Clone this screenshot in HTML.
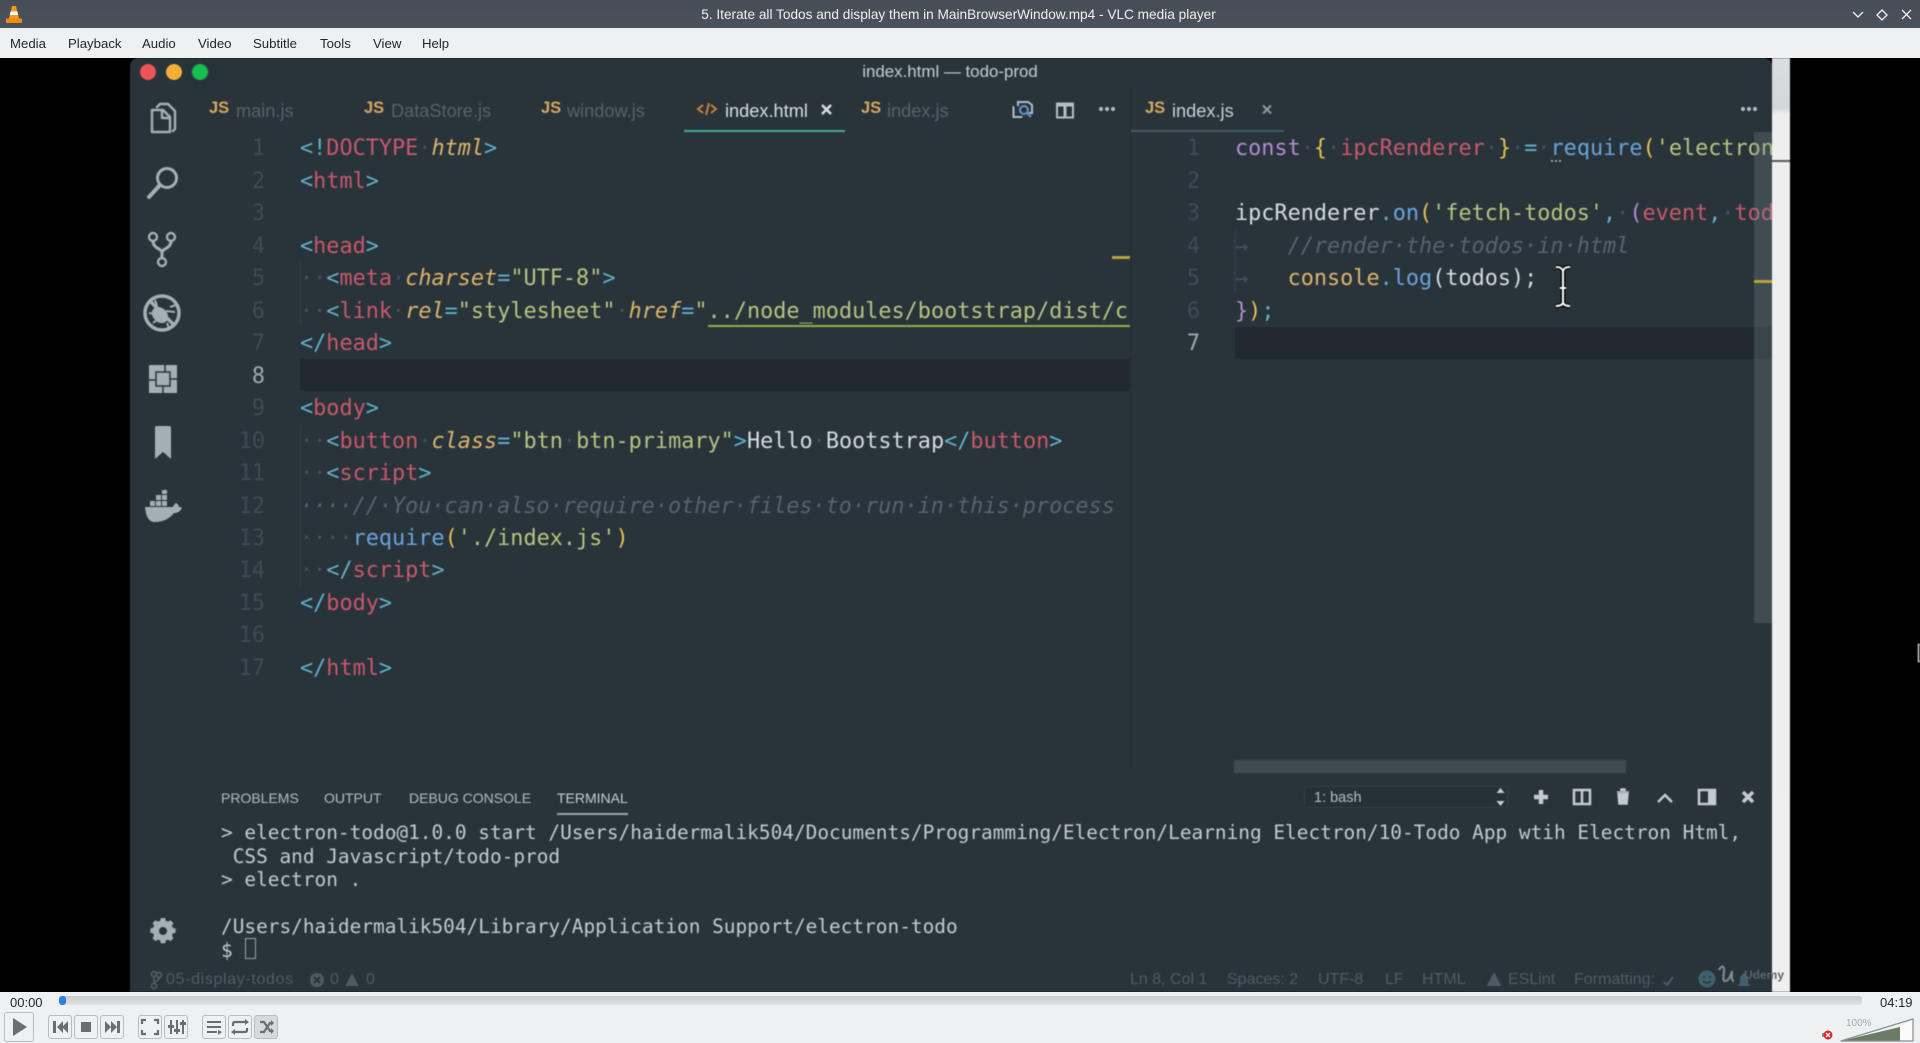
<!DOCTYPE html>
<html><head><meta charset="utf-8"><title>VLC</title>
<style>
html,body{margin:0;padding:0;width:1920px;height:1043px;overflow:hidden;background:#000;font-family:"Liberation Sans",sans-serif}
.a{position:absolute;white-space:nowrap}
pre.a{white-space:pre}
#tb{left:0;top:0;width:1920px;height:28px;background:linear-gradient(#454d56,#4a525b)}
#mb{left:0;top:28px;width:1920px;height:30px;background:#eff0f1}
.m{top:35.500px;font-size:13.2px;color:#232629;line-height:16px}
#vid{left:0;top:58px;width:1920px;height:934px;background:#000;overflow:hidden}
#in{position:absolute;left:0;top:0;width:1920px;height:1043px;filter:blur(.45px)}
#win{left:130px;top:58px;width:1642px;height:940px;background:#28333a;border-radius:8px 8px 0 0}
#st{left:1772px;top:58px;width:18px;height:934px;background:linear-gradient(#dcdde0 0,#d5d6da 50px,#eeeeee 56px,#efefef 100%)}
pre{margin:0;font-family:"DejaVu Sans Mono","Liberation Mono",monospace;font-size:21.83px;line-height:32.47px;color:#d5dcdf}
.code{top:133.4px;overflow:hidden;height:620px}
.ln{top:133.4px;text-align:right;color:#3f4c53}
.ln b{font-weight:400;color:#a2aaae}
.c{color:#62b2cc}.r{color:#c9586a}.y{font-style:italic;color:#dcb56c}.s{color:#b5c580}.d{color:#465259}
.g{color:#56646b;font-style:italic}.w{color:#d5dcdf}.b{color:#6aa3dd}.p{color:#b48ad6}.o{color:#dcb56c}.f{color:#e6c14f}
.u{border-bottom:2px solid #8fb04a;padding-bottom:1px}
.t{top:100.500px;font-size:18.2px;line-height:21px;color:#56626a}
.js{top:98px;font-size:16.5px;line-height:20px;font-weight:700;color:#d9a760}
.hd{top:790px;font-size:14px;line-height:16px;color:#b3bcc0}
#term{left:221px;top:821px;font-size:19.43px;line-height:23.5px;color:#c3cbce}
.sb{top:971px;font-size:16px;line-height:18px;color:#4d5c64}
</style></head><body>

<div class="a" id="vid"></div>
<div id="in">
<div class="a" id="st"></div>
<div class="a" style="left:1772px;top:160px;width:18px;height:2px;background:#55595c"></div>
<div class="a" id="win" style="height:934px"></div>

<div class="a" style="left:130px;top:62px;text-align:center;font-size:16.9px;line-height:20px;color:#c6cdd0;width:1640px">index.html — todo-prod</div>
<div class="a" style="left:140px;top:64px;width:16px;height:16px;border-radius:50%;background:#f0525a"></div>
<div class="a" style="left:166px;top:64px;width:16px;height:16px;border-radius:50%;background:#f5ae36"></div>
<div class="a" style="left:192px;top:64px;width:16px;height:16px;border-radius:50%;background:#16bd50"></div>

<!-- active lines -->
<div class="a" style="left:300px;top:359px;width:830px;height:32px;background:#1f292f"></div>
<div class="a" style="left:1235px;top:326.5px;width:537px;height:32.5px;background:#1f292f"></div>

<!-- indent guides -->
<div class="a" style="left:300px;top:262px;width:1px;height:64px;background:#323e45"></div>
<div class="a" style="left:300px;top:424px;width:1px;height:162px;background:#323e45"></div>

<!-- tabs -->
<div class="a js" style="left:209px">JS</div><div class="a t" style="left:236px">main.js</div>
<div class="a js" style="left:364px">JS</div><div class="a t" style="left:391px">DataStore.js</div>
<div class="a js" style="left:541px">JS</div><div class="a t" style="left:567px">window.js</div>
<div class="a t" style="left:725px;color:#d8dee0">index.html</div>
<div class="a js" style="left:861px">JS</div><div class="a t" style="left:887px">index.js</div>
<div class="a js" style="left:1145px">JS</div><div class="a t" style="left:1172px;color:#c8d0d3">index.js</div>
<div class="a" style="left:684px;top:130px;width:161px;height:2px;background:#47a995"></div>
<div class="a" style="left:1130px;top:130px;width:154px;height:2px;background:#4a5a62"></div>
<div class="a" style="left:1130px;top:90px;width:1px;height:680px;background:#232d33"></div>

<!-- gutters -->
<pre class="a ln" style="left:220px;width:45px">1
2
3
4
5
6
7
<b>8</b>
9
10
11
12
13
14
15
16
17</pre>
<pre class="a ln" style="left:1160px;width:40px">1
2
3
4
5
6
<b>7</b></pre>

<!-- left code -->
<pre class="a code" style="left:300px;width:830px"><span class="c">&lt;!</span><span class="r">DOCTYPE</span><span class="d">·</span><span class="y">html</span><span class="c">&gt;</span>
<span class="c">&lt;</span><span class="r">html</span><span class="c">&gt;</span>

<span class="c">&lt;</span><span class="r">head</span><span class="c">&gt;</span>
<span class="d">··</span><span class="c">&lt;</span><span class="r">meta</span><span class="d">·</span><span class="y">charset</span><span class="c">=</span><span class="s">"UTF-8"</span><span class="c">&gt;</span>
<span class="d">··</span><span class="c">&lt;</span><span class="r">link</span><span class="d">·</span><span class="y">rel</span><span class="c">=</span><span class="s">"stylesheet"</span><span class="d">·</span><span class="y">href</span><span class="c">=</span><span class="s">"<span class="u">../node_modules/bootstrap/dist/css/bootstrap.min.css</span></span>
<span class="c">&lt;/</span><span class="r">head</span><span class="c">&gt;</span>

<span class="c">&lt;</span><span class="r">body</span><span class="c">&gt;</span>
<span class="d">··</span><span class="c">&lt;</span><span class="r">button</span><span class="d">·</span><span class="y">class</span><span class="c">=</span><span class="s">"btn<span class="d">·</span>btn-primary"</span><span class="c">&gt;</span>Hello<span class="d">·</span>Bootstrap<span class="c">&lt;/</span><span class="r">button</span><span class="c">&gt;</span>
<span class="d">··</span><span class="c">&lt;</span><span class="r">script</span><span class="c">&gt;</span>
<span class="g">····//·You·can·also·require·other·files·to·run·in·this·process</span>
<span class="d">····</span><span class="b">require</span><span class="f">(</span><span class="s">'./index.js'</span><span class="f">)</span>
<span class="d">··</span><span class="c">&lt;/</span><span class="r">script</span><span class="c">&gt;</span>
<span class="c">&lt;/</span><span class="r">body</span><span class="c">&gt;</span>

<span class="c">&lt;/</span><span class="r">html</span><span class="c">&gt;</span></pre>

<!-- right code -->
<pre class="a code" style="left:1235px;width:537px"><span class="p">const</span><span class="d">·</span><span class="f">{</span><span class="d">·</span><span class="r">ipcRenderer</span><span class="d">·</span><span class="f">}</span><span class="d">·</span><span class="c">=</span><span class="d">·</span><span class="b">require</span><span class="f">(</span><span class="s">'electron'</span><span class="f">)</span>

<span class="w">ipcRenderer</span><span class="c">.</span><span class="b">on</span><span class="f">(</span><span class="s">'fetch-todos'</span><span class="c">,</span><span class="d">·</span><span class="p">(</span><span class="r">event</span><span class="c">,</span><span class="d">·</span><span class="r">todos</span><span class="p">)</span>
<span class="d">→</span>   <span class="g">//render·the·todos·in·html</span>
<span class="d">→</span>   <span class="o">console</span><span class="c">.</span><span class="b">log</span><span class="w">(todos);</span>
<span class="p">}</span><span class="f">)</span><span class="c">;</span></pre>

<!-- scrollbars, markers -->
<div class="a" style="left:1754px;top:132px;width:18px;height:491px;background:rgba(120,135,140,.3)"></div>
<div class="a" style="left:1234px;top:760px;width:392px;height:13px;background:#3f4b52"></div>
<div class="a" style="left:1112px;top:256px;width:18px;height:3px;background:#b9a23d"></div>
<div class="a" style="left:1754px;top:280px;width:18px;height:3px;background:#b9a23d"></div>

<!-- panel -->
<div class="a hd" style="left:221px">PROBLEMS</div>
<div class="a hd" style="left:324px">OUTPUT</div>
<div class="a hd" style="left:409px">DEBUG CONSOLE</div>
<div class="a hd" style="left:557px;color:#c6ced1">TERMINAL</div>
<div class="a" style="left:557px;top:813px;width:71px;height:2px;background:#9aa5a9"></div>
<div class="a" style="left:1304px;top:786px;width:204px;height:22px;border:1px solid #323f46;border-radius:4px;box-sizing:border-box;background:#263037"></div>
<div class="a" style="left:1314px;top:790px;font-size:14.5px;line-height:17px;color:#b4bdc1">1: bash</div>
<pre class="a" id="term">&gt; electron-todo@1.0.0 start /Users/haidermalik504/Documents/Programming/Electron/Learning Electron/10-Todo App wtih Electron Html,
 CSS and Javascript/todo-prod
&gt; electron .

/Users/haidermalik504/Library/Application Support/electron-todo
$ </pre>
<div class="a" style="left:245px;top:938px;width:11px;height:21px;border:1.5px solid #9ba5a9;box-sizing:border-box"></div>

<!-- status bar -->
<div class="a sb" style="left:166px;letter-spacing:.65px">05-display-todos</div>
<div class="a sb" style="left:330px">0</div>
<div class="a sb" style="left:366px">0</div>
<div class="a sb" style="left:1130px">Ln 8, Col 1</div>
<div class="a sb" style="left:1227px">Spaces: 2</div>
<div class="a sb" style="left:1318px">UTF-8</div>
<div class="a sb" style="left:1385px">LF</div>
<div class="a sb" style="left:1422px">HTML</div>
<div class="a sb" style="left:1508px">ESLint</div>
<div class="a sb" style="left:1574px">Formatting:</div>
<div class="a" style="left:1744px;top:968px;font-size:12px;line-height:14px;color:#5a666d;font-weight:700;z-index:3">Udemy</div>

<svg class="a" style="left:0;top:0" width="1920" height="1043" viewBox="0 0 1920 1043" fill="none">
<g stroke="#cf7f3c" stroke-width="2"><path d="M703 105l-5 4 5 4M711 105l5 4-5 4M709 103l-3 12"/></g>
<path d="M822 105l9 9M831 105l-9 9" stroke="#d8dee0" stroke-width="2.6"/>
<path d="M1263 105.500l8 8M1271 105.500l-8 8" stroke="#8d989d" stroke-width="2.2"/>
<g stroke="#a3b0b3" stroke-width="2.4" stroke-linejoin="round" stroke-linecap="round">
<path d="M157 107l3-3h8l7 7v18l-2 2" /><path d="M152 110h11l7 7v15h-18z" stroke-width="2.4"/><path d="M162 111v7h8"/>
<circle cx="167" cy="178" r="9.500" stroke-width="3"/><path d="M160 185l-11 12" stroke-width="4"/>
<circle cx="153" cy="237" r="4"/><circle cx="171" cy="237" r="4"/><circle cx="162" cy="262" r="4"/>
<path d="M153 241c0 8 9 7 9 12v5M171 241c0 8-9 7-9 12" stroke-width="3"/>
<circle cx="162" cy="313" r="17" stroke-width="3.500"/><path d="M150 301l24 24" stroke-width="3.500"/>
</g>
<g fill="#a3b0b3">
<ellipse cx="160" cy="315" rx="7" ry="9" transform="rotate(-45 160 315)"/>
<path d="M155 300l2 6M170 307l6-2M149 313l6 1M167 323l2 5M153 323l4-3M166 311l9 1"  stroke="#a3b0b3" stroke-width="2"/>
<rect x="149" y="365" width="28" height="28"/>
<path d="M155 428q0-2 2-2h12q2 0 2 2v31l-8-7-8 7z"/>
<path d="M145 507h28c1-3 3-4 3-4 2 1 3 3 3 4 2 0 3 1 3 1-2 4-5 5-8 5-4 5-10 9-19 9-6 0-9-5-10-15z"/>
<path d="M150 501h5v5h-5zM156 501h5v5h-5zM162 501h5v5h-5zM156 495h5v5h-5zM162 495h5v5h-5zM162 490h5v4h-5z"/>
<path transform="translate(163 931) scale(.72) translate(-163 -937)" d="M160 919h6l1 4 3 1 3.500-2 4 4-2 3.500 1 3 4 1v6l-4 1-1 3 2 3.500-4 4-3.500-2-3 1-1 4h-6l-1-4-3-1-3.500 2-4-4 2-3.500-1-3-4-1v-6l4-1 1-3-2-3.500 4-4 3.500 2 3-1z"/>
</g>
<path d="M165 365v7M170 379h7M163 386v7M149 380h7" stroke="#28333a" stroke-width="1.500"/>
<rect x="156" y="372" width="14" height="14" stroke="#28333a" stroke-width="1.500"/>
<circle cx="163" cy="931" r="4" fill="#28333a"/>
<g stroke="#b4bec2" stroke-width="2" fill="none">
<path d="M1014 107h-0.500v10h9M1022 102h6l4 3v8h-3M1018 106v-4h4"/>
<rect x="1057" y="103.500" width="16" height="14"/><path d="M1065 104v13M1057 105h16" stroke-width="3"/>
</g>
<circle cx="1024" cy="110" r="4" stroke="#5b9bd5" stroke-width="2"/><path d="M1027 113l4 4" stroke="#5b9bd5" stroke-width="2"/>
<g fill="#b4bec2">
<circle cx="1101" cy="109" r="2"/><circle cx="1107" cy="109" r="2"/><circle cx="1113" cy="109" r="2"/>
<circle cx="1743" cy="109" r="2"/><circle cx="1749" cy="109" r="2"/><circle cx="1755" cy="109" r="2"/>
<circle cx="1552" cy="161" r="1"/><circle cx="1556" cy="161" r="1"/><circle cx="1560" cy="161" r="1"/>
</g>
<path d="M1235 230v64" stroke="#37434a"/>
<path d="M1496.500 793l4-5 4 5zM1496.500 801l4 5 4-5z" fill="#c4ccd0"/>
<g stroke="#c3cbce" stroke-width="2.500" fill="none">
<path d="M1541 790v14M1534 797h14" stroke-width="4.500"/>
<rect x="1574" y="790" width="16" height="14"/><path d="M1582 790v14"/>
<path d="M1617 792h12M1621 791v-2h4v2M1618 793l1 11h8l1-11" fill="#c3cbce" stroke-width="1.500"/>
<path d="M1658 802l7-7 7 7"/>
<rect x="1699" y="790" width="16" height="14"/>
<path d="M1743 792l10 10M1753 792l-10 10" stroke-width="3.500"/>
</g>
<rect x="1708" y="790" width="7" height="14" fill="#c3cbce"/>
<g stroke="#4d5c64" stroke-width="1.800" fill="none">
<circle cx="154" cy="974" r="2.500"/><circle cx="154" cy="986" r="2.500"/><circle cx="159" cy="975" r="2.500"/>
<path d="M154 976v8M159 977c0 5-5 4-5 7"/>
</g>
<circle cx="317" cy="980" r="7" fill="#4d5c64"/><path d="M314 977l6 6M320 977l-6 6" stroke="#28333a" stroke-width="2"/>
<path d="M352 973l7 13h-14z" fill="#4d5c64"/>
<path d="M1494 972l7.500 14h-15z" fill="#4d5c64"/>
<path d="M1664 982l3 3 6-8" stroke="#4d5c64" stroke-width="2"/>
<circle cx="1707" cy="979" r="8.500" fill="#41606f"/><circle cx="1704" cy="977" r="1" fill="#28333a"/><circle cx="1710" cy="977" r="1" fill="#28333a"/><path d="M1703 981q4 4 8 0" stroke="#28333a" stroke-width="1.300"/>
<path d="M1737 986q3-1 3-6t4-7q4 2 4 7t3 6z" fill="#41606f"/>
<path d="M1719 970c2-4 5-5 5 0 0 6-2 11 1 11 4 0 6-6 7-10 0 5-1 10 2 10" stroke="#808a8e" stroke-width="2.200"/>
<path d="M1556 267c4 0 6 1 7 4 1-3 3-4 7-4M1563 271v32M1556 306c4 0 6-1 7-3 1 2 3 3 7 3M1560 288h6" stroke="#000" stroke-width="4.500"/>
<path d="M1556 267c4 0 6 1 7 4 1-3 3-4 7-4M1563 271v32M1556 306c4 0 6-1 7-3 1 2 3 3 7 3M1560 288h6" stroke="#fff" stroke-width="2"/>
<path d="M1920 644.500h-1.500v17h1.500" stroke="#cfcfcf" stroke-width="1.500"/>
</svg>
</div>

<!-- chrome (sharp) -->
<div class="a" id="tb"></div>
<div class="a" id="mb"></div>
<div class="a" style="left:0;top:5px;width:1917px;text-align:center;font-size:13.65px;line-height:20px;color:#eff0f1">5. Iterate all Todos and display them in MainBrowserWindow.mp4 - VLC media player</div>
<svg class="a" style="left:6px;top:5px" width="16" height="19" viewBox="0 0 16 19"><path d="M6 1h4l1.600 7h-7.200z" fill="#f39a1e"/><path d="M4.600 6.500h6.800l.8 3.500H3.800z" fill="#fff"/><path d="M3.800 10h8.400l1 3.500H2.800z" fill="#f39a1e"/><path d="M0 13.500h3l10 0h3v4.500H0z" fill="#f08a10"/></svg>
<svg class="a" style="left:1848px;top:7px" width="70" height="14" fill="none" stroke="#f4f5f5" stroke-width="1.300"><path d="M5 5l5 5 5-5"/><path d="M34 3l5 5-5 5-5-5z"/><path d="M54 3l9 9M63 3l-9 9"/></svg>
<div class="a m" style="left:10px">Media</div>
<div class="a m" style="left:68px">Playback</div>
<div class="a m" style="left:142px">Audio</div>
<div class="a m" style="left:198px">Video</div>
<div class="a m" style="left:253px">Subtitle</div>
<div class="a m" style="left:320px">Tools</div>
<div class="a m" style="left:373px">View</div>
<div class="a m" style="left:422px">Help</div>

<!-- bottom controls -->
<div class="a" style="left:0;top:992px;width:1920px;height:51px;background:#eff0f1"></div>
<div class="a" style="left:10px;top:994.500px;font-size:13px;line-height:15px;color:#232629">00:00</div>
<div class="a" style="left:1880px;top:994.500px;font-size:13px;line-height:15px;color:#232629">04:19</div>
<div class="a" style="left:59px;top:996px;width:1803px;height:9px;border-radius:3px;background:linear-gradient(#c9cacb,#e2e3e4)"></div>
<div class="a" style="left:59px;top:996px;width:7px;height:9px;border-radius:3px;background:#2f7fe0"></div>
<div class="a" style="left:4px;top:1012px;width:30px;height:30px;border:1px solid #bbbcbd;border-radius:3px;box-sizing:border-box"></div>
<div class="a" style="left:48px;top:1015px;width:24px;height:24px;border:1px solid #bbbcbd;border-radius:3px;box-sizing:border-box"></div>
<div class="a" style="left:74px;top:1015px;width:24px;height:24px;border:1px solid #bbbcbd;border-radius:3px;box-sizing:border-box"></div>
<div class="a" style="left:100px;top:1015px;width:24px;height:24px;border:1px solid #bbbcbd;border-radius:3px;box-sizing:border-box"></div>
<div class="a" style="left:138px;top:1015px;width:24px;height:24px;border:1px solid #bbbcbd;border-radius:3px;box-sizing:border-box"></div>
<div class="a" style="left:164px;top:1015px;width:24px;height:24px;border:1px solid #bbbcbd;border-radius:3px;box-sizing:border-box"></div>
<div class="a" style="left:202px;top:1015px;width:24px;height:24px;border:1px solid #bbbcbd;border-radius:3px;box-sizing:border-box"></div>
<div class="a" style="left:228px;top:1015px;width:24px;height:24px;border:1px solid #bbbcbd;border-radius:3px;box-sizing:border-box"></div>
<div class="a" style="left:254px;top:1015px;width:24px;height:24px;border:1px solid #bbbcbd;border-radius:3px;box-sizing:border-box;background:#d8d9da"></div>
<svg class="a" style="left:0;top:0" width="1920" height="1043" fill="none">
<path d="M13 1018l14 9-14 9z" fill="#6c6d6e"/>
<g fill="#6c6d6e">
<path d="M53 1021h3v12h-3zM57 1027l6-6v12zM62 1027l6-6v12z"/>
<rect x="81" y="1022" width="10" height="10"/>
<path d="M105 1021l6 6-6 6zM111 1021l6 6-6 6zM117 1021h3v12h-3z"/>
<path d="M170 1020h2v5h2v3h-2v6h-2v-6h-2v-3h2zM176 1020h2v9h2v3h-2v2h-2v-2h-2v-3h2zM182 1020h2v2h2v3h-2v9h-2v-9h-2v-3h2z"/>
<path d="M207 1021h14v2h-14zM207 1026h14v2h-14zM207 1031h10v2h-10zM218 1030l4 2-4 3z"/>
</g>
<g stroke="#6c6d6e" stroke-width="2.200">
<path d="M142 1024v-4h4M154 1020h4v4M142 1030v4h4M158 1030v4h-4"/>
<path d="M233 1026v-2q0-2 2-2h12M247 1028v2q0 2-2 2h-12"/>
<path d="M260 1022l4 0 6 9h2M260 1032l4 0 6-9h2"/>
</g>
<path d="M245 1019l4 3-4 3zM235 1029l-4 3 4 3zM271 1020l3 3-3 3zM271 1028l3 3-3 3z" fill="#6c6d6e"/>
<path d="M1841 1041l59-14v14z" fill="#6a7c66"/>
<path d="M1900 1027l13-8v22h-13z" fill="#fbfbfb"/>
<path d="M1841 1041l72-22v22z" stroke="#8a8b8c" stroke-width="1.200" stroke-linejoin="round"/>
<path d="M1822 1033h3l4-3v10l-4-3h-3z" fill="#8c8d8e"/>
<circle cx="1828" cy="1035" r="4.500" fill="#e4242c"/><path d="M1826 1033l4 4M1830 1033l-4 4" stroke="#fff" stroke-width="1.300"/>
</svg>
<div class="a" style="left:1846px;top:1018px;font-size:10px;line-height:12px;color:#a8a9aa">100%</div>
</body></html>
